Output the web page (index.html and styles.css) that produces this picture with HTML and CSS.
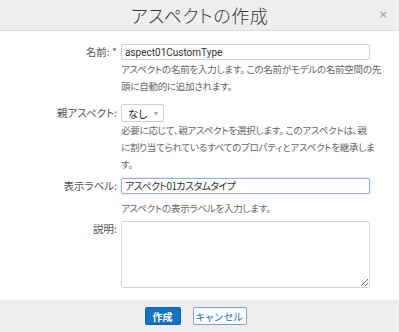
FILE: index.html
```html
<!DOCTYPE html>
<html lang="ja">
<head>
    <meta charset="UTF-8">
    <title>アスペクトの作成</title>
    <link rel="stylesheet" href="styles.css">
</head>
<body>
    <div class="dialog">
        <!-- Header -->
        <header class="dialog-header">
            <div class="dialog-title">アスペクトの作成</div>
            <span class="close-button">×</span>
        </header>

        <!-- Form -->
        <div class="dialog-body">
            <div class="form-row row-name">
                <label class="form-label">名前: *</label>
                <div class="form-field">
                    <input class="text-input" type="text" value="aspect01CustomType">
                    <div class="help-text">アスペクトの名前を入力します。 この名前がモデルの名前空間の先<br>頭に自動的に追加されます。</div>
                </div>
            </div>

            <div class="form-row row-parent">
                <label class="form-label">親アスペクト:</label>
                <div class="form-field">
                    <div class="select-box">
                        <span>なし</span>
                        <span class="select-caret">▾</span>
                    </div>
                    <div class="help-text">必要に応じて、親アスペクトを選択します。 このアスペクトは、親<br>に割り当てられているすべてのプロパティとアスペクトを継承しま<br>す。</div>
                </div>
            </div>

            <div class="form-row row-title">
                <label class="form-label">表示ラベル:</label>
                <div class="form-field">
                    <div class="text-input jp focused" role="textbox">アスペクト01カスタムタイプ</div>
                    <div class="help-text">アスペクトの表示ラベルを入力します。</div>
                </div>
            </div>

            <div class="form-row row-desc">
                <label class="form-label">説明:</label>
                <div class="form-field">
                    <textarea class="text-area"></textarea>
                </div>
            </div>
        </div>

        <!-- Footer -->
        <footer class="dialog-footer">
            <button class="btn btn-primary">作成</button>
            <button class="btn btn-secondary">キャンセル</button>
        </footer>
    </div>
</body>
</html>
```

FILE: styles.css
```css
/* Base */
* {
    margin: 0;
    padding: 0;
    box-sizing: border-box;
}

body {
    font-family: "Noto Sans CJK JP", "Noto Sans", sans-serif;
    font-feature-settings: "palt";
    background: #fff;
    width: 400px;
    height: 332px;
    overflow: hidden;
}

.dialog {
    height: 332px;
    display: flex;
    flex-direction: column;
    border-right: 1px solid #d4d4d4;
}

/* Header */
.dialog-header {
    height: 31px;
    background: #eeeeee;
    border-bottom: 1px solid #dcdcdc;
    display: flex;
    align-items: center;
    justify-content: center;
    position: relative;
}

.dialog-title {
    font-size: 18px;
    font-weight: 300;
    color: #3a3a3a;
    letter-spacing: 0.5px;
}

.close-button {
    position: absolute;
    right: 11px;
    top: 8px;
    font-size: 11px;
    color: #999;
    font-family: "DejaVu Sans", sans-serif;
}

/* Body */
.dialog-body {
    flex: 1;
    padding-top: 13px;
}

.form-row {
    display: grid;
    grid-template-columns: 117px 249px;
    column-gap: 4px;
}

.form-label {
    font-size: 10.5px;
    color: #555;
    text-align: right;
    line-height: 16px;
}

.row-parent { margin-top: 9px; }
.row-parent .form-label { line-height: 18px; }
.row-title { margin-top: 5px; }
.row-desc { margin-top: 4px; }

.text-input {
    display: block;
    width: 100%;
    height: 16px;
    border: 1px solid #cfcfcf;
    border-radius: 2px;
    padding: 0 3px;
    font-family: "Roboto", sans-serif;
    font-size: 10px;
    color: #333;
    outline: none;
}

.text-input.jp {
    font-family: "Noto Sans CJK JP", sans-serif;
    font-size: 10px;
    line-height: 14px;
    letter-spacing: -0.6px;
    font-feature-settings: "palt";
}

.text-input.focused {
    border-color: #8fb3dd;
    box-shadow: 0 0 2px rgba(90,140,210,0.4);
}

.help-text {
    font-size: 9.5px;
    letter-spacing: -0.25px;
    white-space: nowrap;
    color: #666;
    line-height: 17px;
    margin-top: 1px;
}

.row-parent .help-text {
    margin-top: 0;
}

.row-title .help-text {
    margin-top: 6px;
}

.select-box {
    width: 43px;
    height: 18px;
    border: 1px solid #cfcfcf;
    border-radius: 2px;
    display: flex;
    align-items: center;
    justify-content: space-between;
    padding: 0 5px 0 6px;
    font-size: 10.5px;
    color: #222;
}

.select-caret {
    font-size: 8px;
    color: #8fa8c8;
    font-family: "DejaVu Sans", sans-serif;
}

.text-area {
    display: block;
    width: 100%;
    height: 67px;
    border: 1px solid #d6d6d6;
    border-radius: 2px;
    resize: both;
    font-family: inherit;
}

/* Footer */
.dialog-footer {
    height: 32px;
    background: #eeeeee;
    display: flex;
    align-items: center;
    justify-content: center;
    gap: 12px;
    padding-right: 8px;
}

.btn {
    height: 18px;
    border-radius: 2px;
    font-family: "Noto Sans CJK JP", sans-serif;
    font-size: 10px;
    font-feature-settings: "palt";
    cursor: pointer;
}

.btn-primary {
    width: 36px;
    background: #1472c2;
    border: 1px solid #0e62ab;
    color: white;
    font-weight: 700;
}

.btn-secondary {
    width: 54px;
    background: white;
    border: 1px solid #7aa3d4;
    color: #2a6db5;
    letter-spacing: 0.5px;
}
```
